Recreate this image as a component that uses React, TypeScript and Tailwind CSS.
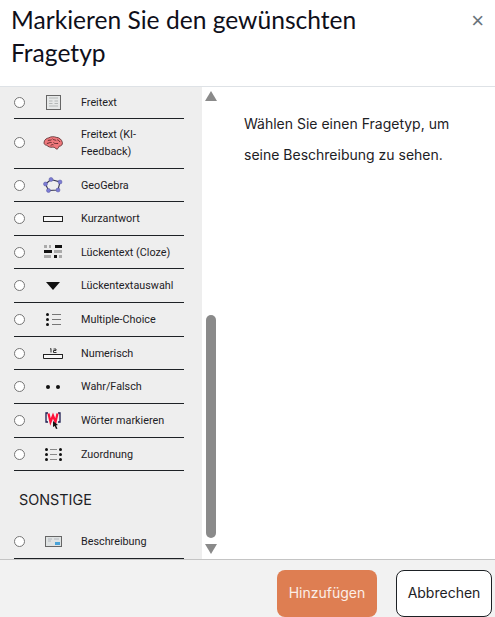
import React from 'react';

const FreitextIcon = () => (
  <svg width="15" height="15" viewBox="0 0 15 15">
    <rect x=".5" y=".5" width="14" height="14" fill="#e6e8e8" stroke="#666" strokeWidth="1" />
    <path d="M3 3h9M3 6h3.500M8.500 6H12M3 8.500h3.500M8.500 8.500H12M3 11h9" stroke="#b4b8b8" strokeWidth="1.200" />
  </svg>
);

const BrainIcon = () => (
  <svg width="20" height="15" viewBox="0 0 21 16">
    <path d="M1 7.500C1.500 4.500 4 3.500 6 3C8 1.500 12 1.500 14 2.500C17 2.500 20 5 20.500 8C21 10.500 19 12 17 12C16.500 13.500 15.500 15.500 14 15C13 13.500 12 13 10 13C8 13.500 5 12.500 4 11C2 11 .5 9.500 1 7.500Z" fill="#f0787c" stroke="#4a2022" strokeWidth=".8" />
    <path d="M5 6c1.500-1 3 0 4-1M10 4c1 1.500 3 1 4 2M4 9c2 0 3-1.500 5-1M11 8c1 1.500 3 1 5 1M8 11c1-.5 2-1 3-.5M15 5c1 .5 2 1 3 2.500" fill="none" stroke="#4a2022" strokeWidth=".9" />
  </svg>
);

const GeoGebraIcon = () => (
  <svg width="20" height="16" viewBox="0 0 20 16">
    <path d="M2.500 7L8 2.500L17 5L15 13L5.500 13.500Z" fill="none" stroke="#333350" strokeWidth="1.100" />
    {[[2.500, 7], [8, 2.500], [17, 5], [15, 13], [5.500, 13.500]].map(([cx, cy]) => (
      <circle key={cx} cx={cx} cy={cy} r="2" fill="#7c7cd4" stroke="#5656a0" strokeWidth=".5" />
    ))}
  </svg>
);

const KurzantwortIcon = () => (
  <svg width="20" height="6" viewBox="0 0 20 6">
    <rect x=".5" y=".5" width="19" height="5" fill="#f8f8f8" stroke="#222" strokeWidth="1" />
  </svg>
);

const ClozeIcon = () => (
  <svg width="18" height="14" viewBox="0 0 18 14">
    <rect x="0" y="0" width="3" height="3" fill="#aaa" />
    <rect x="5" y="0" width="2" height="3" fill="#aaa" />
    <rect x="11" y="0" width="7" height="3" fill="#111" />
    <rect x="0" y="5" width="8" height="3" fill="#111" />
    <rect x="10" y="5" width="8" height="3" fill="#aaa" />
    <rect x="0" y="10" width="7" height="3" fill="#aaa" />
    <rect x="10" y="10" width="3" height="3" fill="#111" />
    <rect x="15" y="10" width="3" height="3" fill="#aaa" />
  </svg>
);

const DropdownIcon = () => (
  <svg width="14" height="8" viewBox="0 0 14 8">
    <path d="M0 0h14L7 8Z" fill="#111" />
  </svg>
);

const MultiChoiceIcon = () => (
  <svg width="15" height="13" viewBox="0 0 15 13">
    <circle cx="1.500" cy="1.500" r="1.500" fill="#111" />
    <circle cx="1.500" cy="6.500" r="1.500" fill="#111" />
    <circle cx="1.500" cy="11.500" r="1.500" fill="#111" />
    <path d="M6 1.500h9M6 6.500h9M6 11.500h9" stroke="#777" strokeWidth="1" />
  </svg>
);

const NumerischIcon = () => (
  <svg width="20" height="11" viewBox="0 0 20 11">
    <path d="M7 1.200l1-.7v4M10.500 1h2.500v1.500h-2.500V4.500h3" fill="none" stroke="#333" strokeWidth="1" />
    <path d="M.5 6v4.500h19V6" fill="#f8f8f8" stroke="#222" strokeWidth="1" />
    <path d="M.5 6.500h19" stroke="#222" strokeWidth="1" />
  </svg>
);

const WahrFalschIcon = () => (
  <svg width="14" height="4" viewBox="0 0 14 4">
    <circle cx="2" cy="2" r="2" fill="#111" />
    <circle cx="12" cy="2" r="2" fill="#111" />
  </svg>
);

const WoerterIcon = () => (
  <svg width="16" height="17" viewBox="0 0 16 17">
    <path d="M3 1H1v9h2M13 1h2v9h-2" fill="none" stroke="#1c1c50" strokeWidth="1.300" />
    <path d="M3.500 1.500L5.500 10L8 3.500L10.500 10L12.500 1.500" fill="none" stroke="#ff1038" strokeWidth="2.200" />
    <path d="M8 9l5 4-2 .5 1.500 3-1.500.5-1.200-3L8 15Z" fill="#111" />
  </svg>
);

const ZuordnungIcon = () => (
  <svg width="17" height="13" viewBox="0 0 17 13">
    {[1.500, 6.500, 11.500].flatMap((cy) => [
      <circle key={`l${cy}`} cx="1.500" cy={cy} r="1.500" fill="#111" />,
      <circle key={`r${cy}`} cx="15.500" cy={cy} r="1.500" fill="#111" />,
    ])}
    <path d="M5 1.500h7M5 6.500h7M5 11.500h7" stroke="#888" strokeWidth="1" />
  </svg>
);

const BeschreibungIcon = () => (
  <svg width="17" height="11" viewBox="0 0 17 11">
    <rect x=".5" y=".5" width="16" height="10" fill="#dfe3e3" stroke="#666" strokeWidth="1" />
    <path d="M3 3h4M3 5h3M9 3h5" stroke="#b4b8c0" strokeWidth="1" />
    <rect x="10" y="6" width="5" height="3" fill="#4aa3d8" />
  </svg>
);

const questionTypes = [
  { label: 'Freitext', icon: <FreitextIcon />, h: 'h-[32px]' },
  { label: 'Freitext (KI-Feedback)', icon: <BrainIcon />, h: 'h-[50px] pb-[2px]' },
  { label: 'GeoGebra', icon: <GeoGebraIcon />, h: 'h-[33px]' },
  { label: 'Kurzantwort', icon: <KurzantwortIcon />, h: 'h-[34px]' },
  { label: 'Lückentext (Cloze)', icon: <ClozeIcon />, h: 'h-[33px]' },
  { label: 'Lückentextauswahl', icon: <DropdownIcon />, h: 'h-[34px]' },
  { label: 'Multiple-Choice', icon: <MultiChoiceIcon />, h: 'h-[34px]' },
  { label: 'Numerisch', icon: <NumerischIcon />, h: 'h-[33px]' },
  { label: 'Wahr/Falsch', icon: <WahrFalschIcon />, h: 'h-[34px]' },
  { label: 'Wörter markieren', icon: <WoerterIcon />, h: 'h-[34px]' },
  { label: 'Zuordnung', icon: <ZuordnungIcon />, h: 'h-[33px]' },
];

function TypeRow({ label, icon, h }: { label: string; icon: React.ReactNode; h: string }) {
  return (
    <div className={`${h} flex items-center border-b border-[#1d2125]`}>
      <span className="w-[11px] h-[11px] rounded-full bg-white border border-[#767676] shrink-0" />
      <span className="w-[44px] ml-[6px] flex justify-center shrink-0">{icon}</span>
      <span className="ml-[6px] w-[92px] text-[10.800px] leading-[17px] text-[#1d2125] font-['Roboto',sans-serif]">{label}</span>
    </div>
  );
}

export default function App() {
  return (
    <div className="w-[495px] h-[617px] overflow-hidden flex flex-col bg-white text-[#1d2125] font-['Inter',sans-serif]">
      {/* Header */}
      <div className="h-[87px] shrink-0 border-b border-[#dee2e6] flex justify-between pl-[11px] pr-[11px] pt-[3px]">
        <h1 className="w-[400px] text-[24.600px] leading-[33px] font-normal text-[#0f0f1a] font-['Lato',sans-serif]">
          Markieren Sie den gewünschten Fragetyp
        </h1>
        <span className="text-[22px] leading-[20px] mt-[8px] text-[#6a737b] font-['Liberation_Sans',sans-serif]">×</span>
      </div>

      {/* Body */}
      <div className="h-[472px] shrink-0 flex">
        <div className="w-[202px] shrink-0 bg-[#eeeeee] overflow-hidden pl-[14px] pr-[18px]">
          {questionTypes.map((t) => (
            <TypeRow key={t.label} {...t} />
          ))}
          <div className="h-[54px] pl-[5px] pt-[18px] text-[14.400px] leading-[22px] text-[#1d2125]">SONSTIGE</div>
          <TypeRow label="Beschreibung" icon={<BeschreibungIcon />} h="h-[34px]" />
        </div>

        {/* Scrollbar */}
        <div className="w-[18px] shrink-0 flex flex-col items-center pt-[4px] pb-[5px]">
          <div className="w-0 h-0 border-x-[6.500px] border-x-transparent border-b-[10px] border-b-[#8a8a8a]" />
          <div className="w-[10px] h-[226px] mt-[214px] rounded-[5px] bg-[#8a8a8a]" />
          <div className="w-0 h-0 mt-[6px] border-x-[6.500px] border-x-transparent border-t-[10px] border-t-[#8a8a8a]" />
        </div>

        <div className="flex-1 pl-[24px] pr-[30px] pt-[21px] text-[14px] leading-[31px] text-[#1d2125]">
          Wählen Sie einen Fragetyp, um seine Beschreibung zu sehen.
        </div>
      </div>

      {/* Footer */}
      <div className="flex-1 border-t border-[#c4c4c4] bg-[#f2f2f2] flex justify-end items-start gap-[19px] pt-[10px] pr-[3px]">
        <button className="w-[100px] h-[47px] pb-[2px] rounded-[8px] bg-[#de7e52] text-[#fbeee8] text-[14px]">Hinzufügen</button>
        <button className="w-[96px] h-[47px] pb-[2px] rounded-[8px] bg-white border border-[#1d2125] text-[#1d2125] text-[14px]">Abbrechen</button>
      </div>
    </div>
  );
}
